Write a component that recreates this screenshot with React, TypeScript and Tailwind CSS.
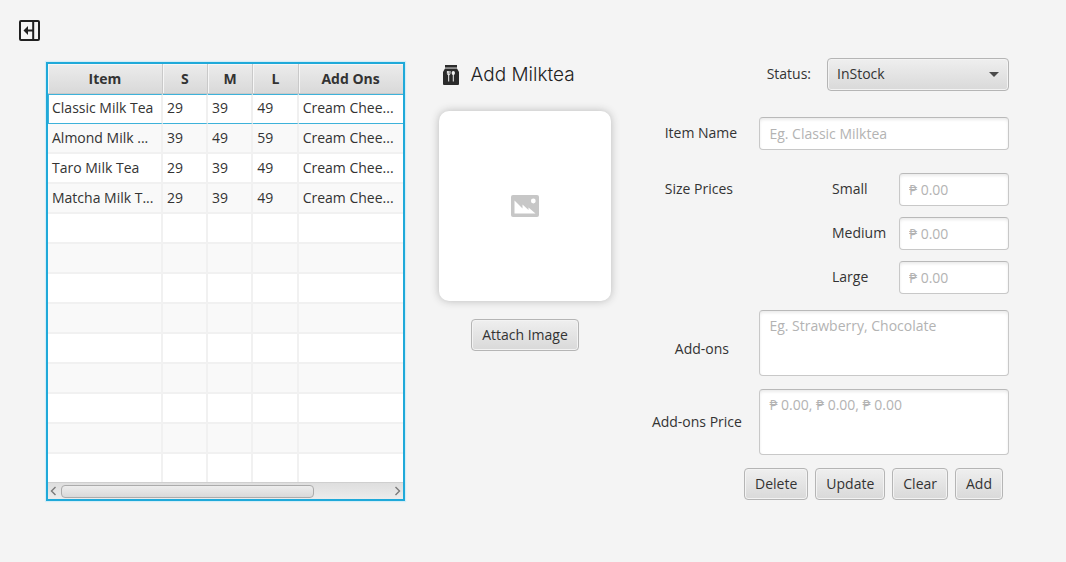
import React from "react";

type Item = { name: string; s: number; m: number; l: number; addOns: string };

const items: Item[] = [
  { name: "Classic Milk Tea", s: 29, m: 39, l: 49, addOns: "Cream Chee..." },
  { name: "Almond Milk ...", s: 39, m: 49, l: 59, addOns: "Cream Chee..." },
  { name: "Taro Milk Tea", s: 29, m: 39, l: 49, addOns: "Cream Chee..." },
  { name: "Matcha Milk T...", s: 29, m: 39, l: 49, addOns: "Cream Chee..." },
];

const EMPTY_ROWS = 9;
const headings = ["Item", "S", "M", "L", "Add Ons"];

const buttonStyle =
  "h-8 rounded-[4px] border border-[#b5b5b5] bg-linear-to-b from-[#efefef] to-[#d9d9d9] whitespace-nowrap shadow-[inset_0_0_0_1px_#f3f3f3]";
const fieldStyle =
  "block rounded-[4px] border border-[#c8c8c8] border-t-[#b9b9b9] bg-white px-[9px] shadow-[inset_0_2px_3px_#ececec] placeholder:text-[#b3b3b3] outline-none";

function CollapseIcon() {
  return (
    <svg viewBox="0 0 21 21" className="size-[21px]" aria-hidden="true">
      <rect x="1" y="1" width="19" height="19" rx="1" fill="none" stroke="#1f1f1f" strokeWidth="2" />
      <path d="M14.200 1v19M7 10.500h7" stroke="#1f1f1f" strokeWidth="2" />
      <path d="M4.500 10.500 9 6v9Z" fill="#1f1f1f" />
    </svg>
  );
}

function BagIcon() {
  return (
    <svg viewBox="0 0 16 20" className="h-5 w-4" aria-hidden="true">
      <path d="M2 0h12v2.600H2Z" fill="#2b2b2b" />
      <path d="M2 3.400h12L16 7v12a1 1 0 0 1-1 1H1a1 1 0 0 1-1-1V7Z" fill="#2b2b2b" />
      <path
        d="M4.400 6v2.600a1.300 1.300 0 0 0 2.600 0V6M5.700 6v10.500M10.300 9v7.500"
        fill="none"
        stroke="#f4f4f4"
        strokeWidth="1"
      />
      <ellipse cx="10.300" cy="7.900" rx="1.700" ry="2" fill="#f4f4f4" />
    </svg>
  );
}

function ImageIcon() {
  return (
    <svg viewBox="0 0 28 22" className="h-[22px] w-7" aria-hidden="true">
      <rect width="28" height="22" rx="2" fill="#c7c7c7" />
      <path d="M3.500 18.500V5.500L11.500 13.500V9.500L17.500 15V12.500L24.500 18.500Z" fill="#fff" />
      <circle cx="22.300" cy="6" r="2.400" fill="#fff" />
    </svg>
  );
}

function ItemTable() {
  return (
    <section className="self-start border-2 border-[#1fa9d9] bg-white shadow-[0_0_1px_1px_#d5edf6]">
      <table className="w-full table-fixed border-separate border-spacing-0 text-left">
        <colgroup>
          <col className="w-[32.4%]" />
          <col className="w-[12.7%]" />
          <col className="w-[12.8%]" />
          <col className="w-[12.8%]" />
          <col />
        </colgroup>
        <thead>
          <tr>
            {headings.map((heading) => (
              <th
                key={heading}
                scope="col"
                className="h-[30px] border-r border-b border-[#c9c9c9] bg-linear-to-b from-[#ececec] to-[#d9d9d9] p-0 text-center font-bold shadow-[inset_1px_1px_0_#f6f6f6] last:border-r-0"
              >
                {heading}
              </th>
            ))}
          </tr>
        </thead>
        <tbody>
          {items.map((item, index) => {
            const cell =
              index === 0
                ? "h-[30px] border-y border-r-2 border-y-[#3db2da] border-r-[#f0f0f0] pt-0 pr-0 pb-[2px] pl-1 whitespace-nowrap first:border-l first:border-l-[#3db2da] first:pl-[3px] last:border-r-0"
                : "h-[30px] border-r-2 border-b-2 border-[#f1f1f1] py-0 pr-0 pl-1 whitespace-nowrap last:border-r-0";
            return (
              <tr key={item.name} className="bg-white even:bg-[#f9f9f9]">
                <td className={cell}>{item.name}</td>
                <td className={cell}>{item.s}</td>
                <td className={cell}>{item.m}</td>
                <td className={cell}>{item.l}</td>
                <td className={cell}>{item.addOns}</td>
              </tr>
            );
          })}
          {Array.from({ length: EMPTY_ROWS }, (_, row) => {
            const cell =
              row === EMPTY_ROWS - 1
                ? "h-7 border-r-2 border-[#f1f1f1] p-0 last:border-r-0"
                : "h-[30px] border-r-2 border-b-2 border-[#f1f1f1] p-0 last:border-r-0";
            return (
              <tr key={row} className="bg-white even:bg-[#f9f9f9]">
                {headings.map((heading) => (
                  <td key={heading} className={cell} />
                ))}
              </tr>
            );
          })}
        </tbody>
      </table>
      <div className="flex h-[17px] items-center gap-1 border-t border-[#cfcfcf] bg-linear-to-b from-[#dedede] to-[#ececec] px-[2px]">
        <button type="button" aria-label="Scroll left">
          <svg viewBox="0 0 7 10" className="block h-[10px] w-[7px]" aria-hidden="true">
            <path d="M5.500 1 1.500 5l4 4" fill="none" stroke="#7a7a7a" strokeWidth="1.400" />
          </svg>
        </button>
        <div className="flex-1">
          <div className="h-[13px] w-[77%] rounded-[4px] border border-[#ababab] bg-linear-to-b from-[#ededed] to-[#d9d9d9]" />
        </div>
        <button type="button" aria-label="Scroll right">
          <svg viewBox="0 0 7 10" className="block h-[10px] w-[7px]" aria-hidden="true">
            <path d="m1.500 1 4 4-4 4" fill="none" stroke="#7a7a7a" strokeWidth="1.400" />
          </svg>
        </button>
      </div>
    </section>
  );
}

function ImagePanel() {
  return (
    <section className="flex flex-col items-center">
      <h1 className="flex h-[26px] items-center gap-3 self-start pl-1 font-[Inter,sans-serif] text-[19px] font-light whitespace-nowrap text-[#222]">
        <BagIcon />
        Add Milktea
      </h1>
      <div className="mt-[23px] flex h-[190px] w-full items-center justify-center rounded-[10px] bg-white shadow-[0_0_8px_#b8b8b8]">
        <ImageIcon />
      </div>
      <button type="button" className={`${buttonStyle} mt-[18px] px-[10px]`}>
        Attach Image
      </button>
    </section>
  );
}

function PriceField({ id, label }: { id: string; label: string }) {
  return (
    <div className="flex items-center">
      <label htmlFor={id} className="w-[67px] pb-[2px]">
        {label}
      </label>
      <input id={id} placeholder="₱ 0.00" className={`${fieldStyle} h-[33px] w-[110px]`} />
    </div>
  );
}

function ItemForm() {
  const label = "w-[115px] shrink-0 text-center";
  return (
    <form className="flex flex-col" onSubmit={(event) => event.preventDefault()}>
      <div className="flex items-center justify-end gap-4">
        <label htmlFor="status" className="pb-[2px]">
          Status:
        </label>
        <div className="relative w-[182px]">
          <select id="status" className={`${buttonStyle} h-[33px]! w-full appearance-none px-[9px] pb-[2px] outline-none`}>
            <option>InStock</option>
            <option>OutOfStock</option>
          </select>
          <svg
            viewBox="0 0 10 5"
            className="pointer-events-none absolute top-[14px] right-[10px] h-[5px] w-[10px]"
            aria-hidden="true"
          >
            <path d="M0 0h10L5 5Z" fill="#4a4a4a" />
          </svg>
        </div>
      </div>
      <div className="mt-[26px] flex items-center">
        <label htmlFor="name" className={`${label} pr-[2px] pb-[2px]`}>
          Item Name
        </label>
        <input id="name" placeholder="Eg. Classic Milktea" className={`${fieldStyle} h-[33px] min-w-0 flex-1`} />
      </div>
      <fieldset className="mt-[23px] flex items-start justify-between" aria-labelledby="sizes">
        <span id="sizes" className="w-[109px] text-center leading-8">
          Size Prices
        </span>
        <div className="flex flex-col gap-[11px]">
          <PriceField id="small" label="Small" />
          <PriceField id="medium" label="Medium" />
          <PriceField id="large" label="Large" />
        </div>
      </fieldset>
      <div className="mt-4 flex items-center">
        <label htmlFor="addons" className={`${label} pt-3`}>
          Add-ons
        </label>
        <textarea
          id="addons"
          placeholder="Eg. Strawberry, Chocolate"
          className={`${fieldStyle} h-[66px] min-w-0 flex-1 resize-none py-[5px]`}
        />
      </div>
      <div className="mt-[13px] flex items-center">
        <label htmlFor="addons-price" className={`${label} pr-[10px]`}>
          Add-ons Price
        </label>
        <textarea
          id="addons-price"
          placeholder="₱ 0.00, ₱ 0.00, ₱ 0.00"
          className={`${fieldStyle} h-[66px] min-w-0 flex-1 resize-none py-[5px]`}
        />
      </div>
      <div className="mt-[13px] flex justify-end gap-[7px] pr-[6px]">
        {["Delete", "Update", "Clear", "Add"].map((action) => (
          <button key={action} type="button" className={`${buttonStyle} px-[10px]`}>
            {action}
          </button>
        ))}
      </div>
    </form>
  );
}

export default function App() {
  return (
    <div className="min-h-screen bg-[#f4f4f4] font-['Open_Sans','Noto_Sans',sans-serif] text-[14px] leading-5 text-[#333]">
      <header className="flex px-[19px] pt-5">
        <button type="button" aria-label="Collapse menu">
          <CollapseIcon />
        </button>
      </header>
      <main className="grid grid-cols-[359fr_174fr_365fr] gap-x-[33px] pt-[17px] pr-[57px] pb-10 pl-[46px]">
        <div className="grid pt-1">
          <ItemTable />
        </div>
        <div className="pt-1 pl-px">
          <ImagePanel />
        </div>
        <ItemForm />
      </main>
    </div>
  );
}
